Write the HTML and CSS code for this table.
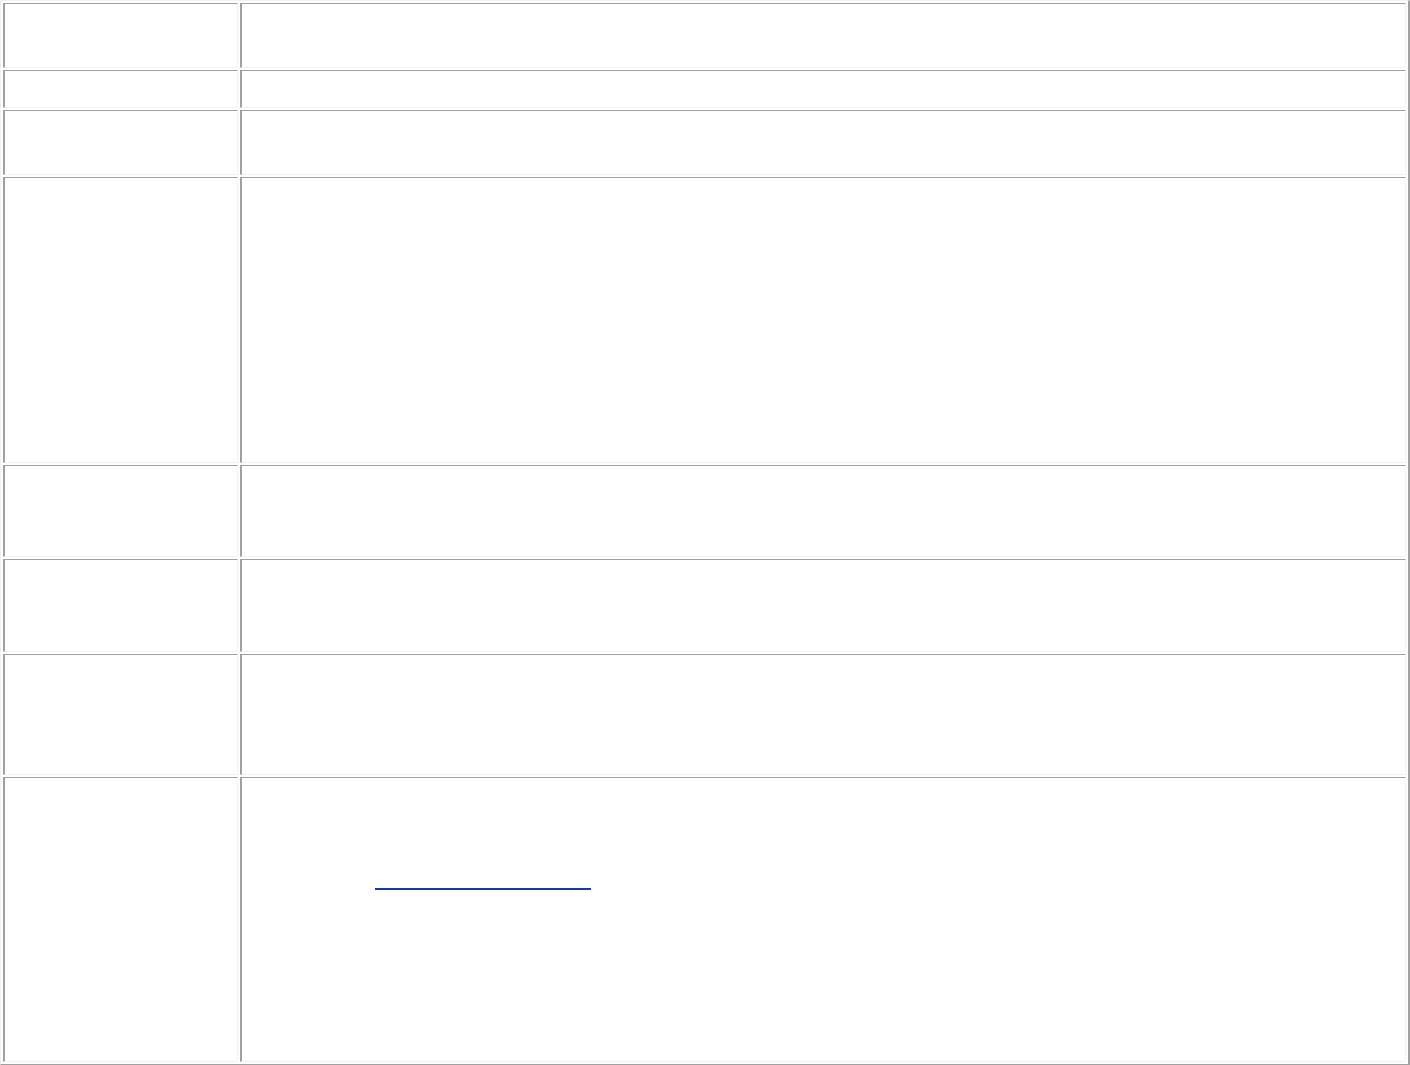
FILE: index.html
```html
<!DOCTYPE html>
<html>
<head>
<meta charset="utf-8">
<title>Table</title>
<link rel="stylesheet" href="styles.css">
</head>
<body>
<table class="grid">
  <colgroup><col class="c1"><col class="c2"></colgroup>
  <tr class="r1"><td></td><td></td></tr>
  <tr class="r2"><td></td><td></td></tr>
  <tr class="r3"><td></td><td></td></tr>
  <tr class="r4"><td></td><td></td></tr>
  <tr class="r5"><td></td><td></td></tr>
  <tr class="r6"><td></td><td></td></tr>
  <tr class="r7"><td></td><td></td></tr>
  <tr class="r8"><td></td><td class="linkcell"><a class="link" href="#">&nbsp;</a></td></tr>
</table>
</body>
</html>
```
FILE: styles.css
```css
html, body {
  margin: 0;
  padding: 0;
  background: #ffffff;
  font-family: "Liberation Serif", serif;
  font-size: 16px;
}
.grid {
  border-collapse: separate;
  border-spacing: 2px;
  border-style: solid;
  border-width: 1px 2px 1px 1px;
  border-color: #f0f0f0 #a0a0a0 #a0a0a0 #f0f0f0;
  width: 1410px;
  height: 1065px;
  table-layout: fixed;
}
.c1 { width: 235px; }
.grid td {
  padding: 0;
  border-style: solid;
  border-width: 1px 1px 1px 2px;
  border-color: #a0a0a0 #f0f0f0 #f0f0f0 #a0a0a0;
  vertical-align: top;
}
.r1 td { height: 63px; }
.r2 td { height: 36px; }
.r3 td { height: 63px; }
.r4 td { height: 284px; }
.r5 td { height: 90px; }
.r6 td { height: 91px; }
.r7 td { height: 119px; }
.r8 td { height: 283px; }
.link {
  display: block;
  width: 216px;
  height: 110px;
  margin-left: 133px;
  border-bottom: 2px solid #1a3aa6;
  text-decoration: none;
  color: #ffffff;
}
```
